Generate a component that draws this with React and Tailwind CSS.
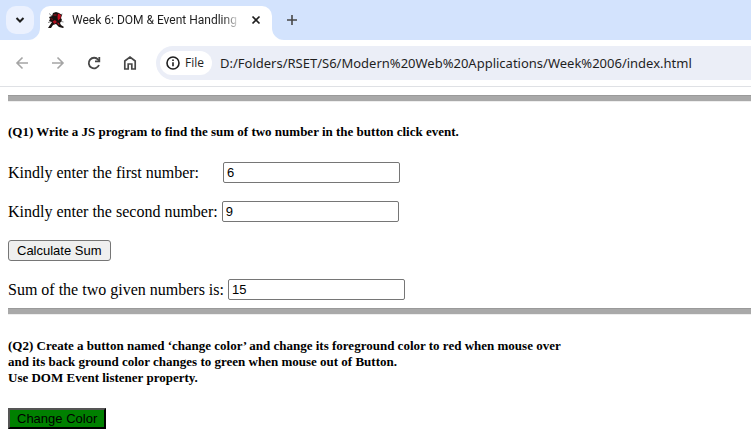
import { useState } from "react";

function NinjaIcon() {
  return (
    <svg className="h-4 w-4 shrink-0" viewBox="0 0 16 16" aria-hidden="true">
      <path d="M1 1.500 4 4M0 10.500l4-1M11 9l4.500 1M12 3l2.500-1" stroke="#8a8a8a" fill="none" />
      <path d="M5 1 8 0l3 1 3 2-1 3 1 2-2 3 1 2 3 2-1 1-4-1-3-3-3 1-2 3H0l2-3 2-3-3-1 1-2-1-2 3-1z" fill="#17110f" />
      <path d="M10 1.500 13 3l-.5 3.500L10 8.500 9.500 5z" fill="#c80f20" />
      <path d="M5.500 2.500h3v1h-3zM4.500 9.500 7 8l2 2-2.500 2zM9 10.500l2 .5.500 2-1.500-.5z" fill="#b01020" />
      <path d="M2.500 6.500 5 7.500" stroke="#7d1018" />
    </svg>
  );
}

function TabStrip() {
  return (
    <div className="flex h-10 items-end bg-[#d3e3fd] pl-[6px]">
      <button aria-label="Search tabs" className="mb-[6px] flex h-7 w-7 items-center justify-center rounded-[10px] bg-[#ebf1fe]">
        <svg className="h-3 w-3" viewBox="0 0 12 12" fill="none" stroke="#1f1f1f" strokeWidth="2" aria-hidden="true">
          <path d="m2.5 4 3.5 3.5L9.5 4" />
        </svg>
      </button>
      <TabCorner />
      <div className="flex h-[34px] w-[232px] items-center rounded-t-[10px] bg-white pb-[6px] pl-2 pr-[10px]">
        <NinjaIcon />
        <span className="ml-2 w-[168px] overflow-hidden whitespace-nowrap font-[Roboto,'Noto_Sans',sans-serif] text-[12px] leading-4 text-[#1f1f1f] [mask-image:linear-gradient(to_right,black_90%,transparent)]">
          Week 6: DOM &amp; Event Handling
        </span>
        <button aria-label="Close tab" className="ml-auto flex h-3 w-3 items-center justify-center">
          <svg className="h-3 w-3" viewBox="0 0 12 12" stroke="#1f1f1f" strokeWidth="1.7" aria-hidden="true">
            <path d="m2.5 2.5 7 7m0-7-7 7" />
          </svg>
        </button>
      </div>
      <svg className="h-3 w-3 shrink-0" viewBox="0 0 12 12" fill="#fff" aria-hidden="true">
        <path d="M0 0v12h12A12 12 0 0 1 0 0z" />
      </svg>
      <button aria-label="New tab" className="mb-3 flex h-4 w-4 items-center justify-center">
        <svg className="h-4 w-4" viewBox="0 0 16 16" stroke="#474747" strokeWidth="1.6" aria-hidden="true">
          <path d="M3 8h10M8 3v10" />
        </svg>
      </button>
    </div>
  );
}

function TabCorner() {
  return (
    <svg className="-ml-[6px] h-3 w-3 shrink-0" viewBox="0 0 12 12" fill="#fff" aria-hidden="true">
      <path d="M12 0v12H0A12 12 0 0 0 12 0z" />
    </svg>
  );
}

function Toolbar() {
  return (
    <div className="flex items-center border-b border-[#dfe1e5] bg-white py-[6px] pl-[14px]">
      <div className="flex w-[142px] shrink-0 items-center gap-5">
        <button aria-label="Back">
          <svg className="h-4 w-4" viewBox="0 0 16 16" fill="none" stroke="#a5a5a5" strokeWidth="1.6" aria-hidden="true">
            <path d="M14 8H3m5.500-5.500L3 8l5.500 5.500" />
          </svg>
        </button>
        <button aria-label="Forward">
          <svg className="h-4 w-4" viewBox="0 0 16 16" fill="none" stroke="#a5a5a5" strokeWidth="1.6" aria-hidden="true">
            <path d="M2 8h11M7.500 2.500 13 8l-5.500 5.500" />
          </svg>
        </button>
        <button aria-label="Reload">
          <svg className="h-4 w-4" viewBox="0 0 16 16" fill="none" stroke="#474747" strokeWidth="1.8" aria-hidden="true">
            <path d="M13 10a5.300 5.300 0 1 1-.8-5.300L13.200 6" />
            <path d="M13.300 2v4.300H9" />
          </svg>
        </button>
        <button aria-label="Home">
          <svg className="h-4 w-4" viewBox="0 0 16 16" fill="none" stroke="#474747" strokeWidth="1.7" aria-hidden="true">
            <path d="M2.800 6 8 2l5.200 4v8H9.800V9H6.200v5H2.800z" />
          </svg>
        </button>
      </div>
      <div className="flex h-[34px] min-w-0 flex-1 items-center rounded-l-full bg-[#ebeef7] pl-1">
        <button className="flex h-6 shrink-0 items-center gap-1 rounded-full bg-white pl-[5px] pr-2 text-[12px] font-medium leading-4 text-[#1f1f1f]">
          <svg className="h-4 w-4" viewBox="0 0 16 16" fill="none" stroke="#1f1f1f" strokeWidth="1.6" aria-hidden="true">
            <circle cx="8" cy="8" r="6" />
            <path d="M8 7.200v4M8 4.500v1.500" />
          </svg>
          File
        </button>
        <input
          aria-label="Address"
          className="ml-2 min-w-0 flex-1 bg-transparent font-['Noto_Sans',sans-serif] text-[13px] leading-5 text-[#1f1f1f] outline-none"
          defaultValue="D:/Folders/RSET/S6/Modern%20Web%20Applications/Week%2006/index.html"
        />
      </div>
    </div>
  );
}

const fieldClass =
  "h-[21px] w-[177px] rounded-[2px] border border-[#767676] bg-white px-[3px] font-['Liberation_Sans',Arial,sans-serif] text-[13px] leading-4 text-black";

function Rule() {
  return <hr className="h-[7px] border-y border-t-[#9a9a9a] border-b-[#eeeeee] bg-[#a9a9a9]" />;
}

export default function App() {
  const [first, setFirst] = useState("6");
  const [second, setSecond] = useState("9");
  const [sum, setSum] = useState("15");
  const [hovered, setHovered] = useState(false);

  return (
    <div className="min-h-screen bg-white">
      <header className="font-['Open_Sans','Noto_Sans',sans-serif]">
        <TabStrip />
        <Toolbar />
      </header>
      <main className="pl-2 pt-2 font-['Liberation_Serif','Times_New_Roman',serif] text-[16px] leading-[18px] text-black">
        <Rule />
        <h5 className="mt-[22px] text-[13px] font-bold leading-4">
          (Q1) Write a JS program to find the sum of two number in the button click event.
        </h5>
        <div className="mt-[22px] flex flex-col items-start gap-[18px]">
          <div className="flex items-center gap-6">
            <label htmlFor="first">Kindly enter the first number:</label>
            <input id="first" className={fieldClass} value={first} onChange={(e) => setFirst(e.target.value)} />
          </div>
          <div className="flex items-center gap-1">
            <label htmlFor="second">Kindly enter the second number:</label>
            <input id="second" className={fieldClass} value={second} onChange={(e) => setSecond(e.target.value)} />
          </div>
          <button
            className="h-[21px] rounded-[3px] border border-[#767676] bg-[#efefef] px-2 font-['Liberation_Sans',Arial,sans-serif] text-[13px] leading-4"
            onClick={() => setSum(String(Number(first) + Number(second)))}
          >
            Calculate Sum
          </button>
          <div className="flex items-center gap-1">
            <label htmlFor="sum">Sum of the two given numbers is:</label>
            <input id="sum" className={fieldClass} value={sum} readOnly />
          </div>
        </div>
        <div className="mt-2">
          <Rule />
        </div>
        <h5 className="mt-[23px] text-[13px] font-bold leading-4">
          (Q2) Create a button named ‘change color’ and change its foreground color to red when mouse over
          <br />
          and its back ground color changes to green when mouse out of Button.
          <br />
          Use DOM Event listener property.
        </h5>
        <button
          className={`mt-[22px] block h-[21px] border-2 border-t-[#555555] border-l-[#555555] border-r-black border-b-black bg-[#008000] px-[7px] font-['Liberation_Sans',Arial,sans-serif] text-[13px] leading-4 ${
            hovered ? "text-[#ff0000]" : "text-black"
          }`}
          onMouseEnter={() => setHovered(true)}
          onMouseLeave={() => setHovered(false)}
        >
          Change Color
        </button>
      </main>
    </div>
  );
}
